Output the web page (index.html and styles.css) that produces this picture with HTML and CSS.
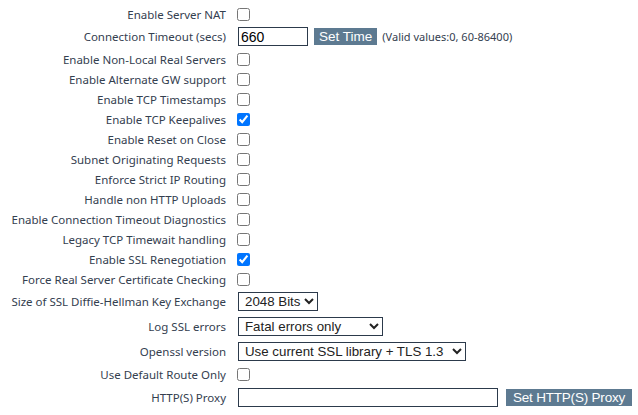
FILE: index.html
```html
<!DOCTYPE html>
<html lang="en">
<head>
    <meta charset="UTF-8">
    <title>Global Settings</title>
    <link rel="stylesheet" href="styles.css">
</head>
<body>
    <form class="settings">
        <div class="row">
            <label class="lbl">Enable Server NAT</label>
            <div class="ctl"><input type="checkbox"></div>
        </div>
        <div class="row row-input">
            <label class="lbl">Connection Timeout (secs)</label>
            <div class="ctl">
                <input type="text" class="txt txt-short" value="660">
                <button type="button" class="btn">Set Time</button>
                <span class="hint">(Valid values:0, 60-86400)</span>
            </div>
        </div>
        <div class="row">
            <label class="lbl">Enable Non-Local Real Servers</label>
            <div class="ctl"><input type="checkbox"></div>
        </div>
        <div class="row">
            <label class="lbl">Enable Alternate GW support</label>
            <div class="ctl"><input type="checkbox"></div>
        </div>
        <div class="row">
            <label class="lbl">Enable TCP Timestamps</label>
            <div class="ctl"><input type="checkbox"></div>
        </div>
        <div class="row">
            <label class="lbl">Enable TCP Keepalives</label>
            <div class="ctl"><input type="checkbox" checked></div>
        </div>
        <div class="row">
            <label class="lbl">Enable Reset on Close</label>
            <div class="ctl"><input type="checkbox"></div>
        </div>
        <div class="row">
            <label class="lbl">Subnet Originating Requests</label>
            <div class="ctl"><input type="checkbox"></div>
        </div>
        <div class="row">
            <label class="lbl">Enforce Strict IP Routing</label>
            <div class="ctl"><input type="checkbox"></div>
        </div>
        <div class="row">
            <label class="lbl">Handle non HTTP Uploads</label>
            <div class="ctl"><input type="checkbox"></div>
        </div>
        <div class="row">
            <label class="lbl">Enable Connection Timeout Diagnostics</label>
            <div class="ctl"><input type="checkbox"></div>
        </div>
        <div class="row">
            <label class="lbl">Legacy TCP Timewait handling</label>
            <div class="ctl"><input type="checkbox"></div>
        </div>
        <div class="row">
            <label class="lbl">Enable SSL Renegotiation</label>
            <div class="ctl"><input type="checkbox" checked></div>
        </div>
        <div class="row">
            <label class="lbl">Force Real Server Certificate Checking</label>
            <div class="ctl"><input type="checkbox"></div>
        </div>
        <div class="row row-select">
            <label class="lbl">Size of SSL Diffie-Hellman Key Exchange</label>
            <div class="ctl">
                <select class="sel">
                    <option>1024 Bits</option>
                    <option selected>2048 Bits</option>
                    <option>4096 Bits</option>
                </select>
            </div>
        </div>
        <div class="row row-select">
            <label class="lbl">Log SSL errors</label>
            <div class="ctl">
                <select class="sel sel-log">
                    <option>No logging</option>
                    <option selected>Fatal errors only</option>
                    <option>All errors</option>
                </select>
            </div>
        </div>
        <div class="row row-select">
            <label class="lbl">Openssl version</label>
            <div class="ctl">
                <select class="sel sel-ssl">
                    <option selected>Use current SSL library + TLS 1.3</option>
                    <option>Use legacy SSL library</option>
                </select>
            </div>
        </div>
        <div class="row row-last-check">
            <label class="lbl">Use Default Route Only</label>
            <div class="ctl"><input type="checkbox"></div>
        </div>
        <div class="row row-input">
            <label class="lbl">HTTP(S) Proxy</label>
            <div class="ctl">
                <input type="text" class="txt txt-long" value="">
                <button type="button" class="btn btn-proxy">Set HTTP(S) Proxy</button>
            </div>
        </div>
    </form>
</body>
</html>
```

FILE: styles.css
```css
body {
    margin: 0;
    padding: 4px 0 0 0;
    background: #fff;
    font-family: "Noto Sans", "Open Sans", sans-serif;
    font-size: 11.5px;
    color: #34404f;
}
.settings {
    display: flex;
    flex-direction: column;
}
.row {
    display: flex;
    align-items: center;
    height: 20px;
}
.row-input {
    height: 25px;
}
.row-select {
    height: 25px;
}
.row-last-check {
    height: 21px;
}
.row:last-child {
    height: 24px;
}
.lbl {
    width: 226px;
    flex: none;
    text-align: right;
    white-space: nowrap;
}
.ctl {
    display: flex;
    align-items: center;
    margin-left: 11px;
    white-space: nowrap;
}
.ctl input[type="checkbox"] {
    width: 13px;
    height: 13px;
    margin: 0;
}
.txt {
    box-sizing: border-box;
    height: 19px;
    margin: 0 0 0 1px;
    padding: 0 2px;
    border: 1px solid #2c3a4b;
    font-family: Arial, "Liberation Sans", sans-serif;
    font-size: 14px;
    color: #000;
}
.txt-short {
    width: 70px;
}
.txt-long {
    width: 260px;
}
.btn {
    height: 17px;
    margin-left: 6px;
    padding: 0 5px;
    border: none;
    background: #5d7a91;
    color: #fff;
    font-family: Arial, "Liberation Sans", sans-serif;
    font-size: 13.5px;
    line-height: 17px;
}
.btn-proxy {
    margin-left: 8px;
    width: 126px;
    padding: 0;
    letter-spacing: -0.2px;
}
.hint {
    margin-left: 5px;
    font-size: 11px;
}
.sel {
    box-sizing: border-box;
    height: 19px;
    margin: 0 0 0 1px;
    padding: 0 0 0 2px;
    border: 1px solid #2c3a4b;
    border-radius: 0;
    background: #fff;
    font-family: Arial, "Liberation Sans", sans-serif;
    font-size: 13.3px;
    color: #222;
}
.sel-log {
    width: 145px;
}
.sel-ssl {
    width: 228px;
}
```
